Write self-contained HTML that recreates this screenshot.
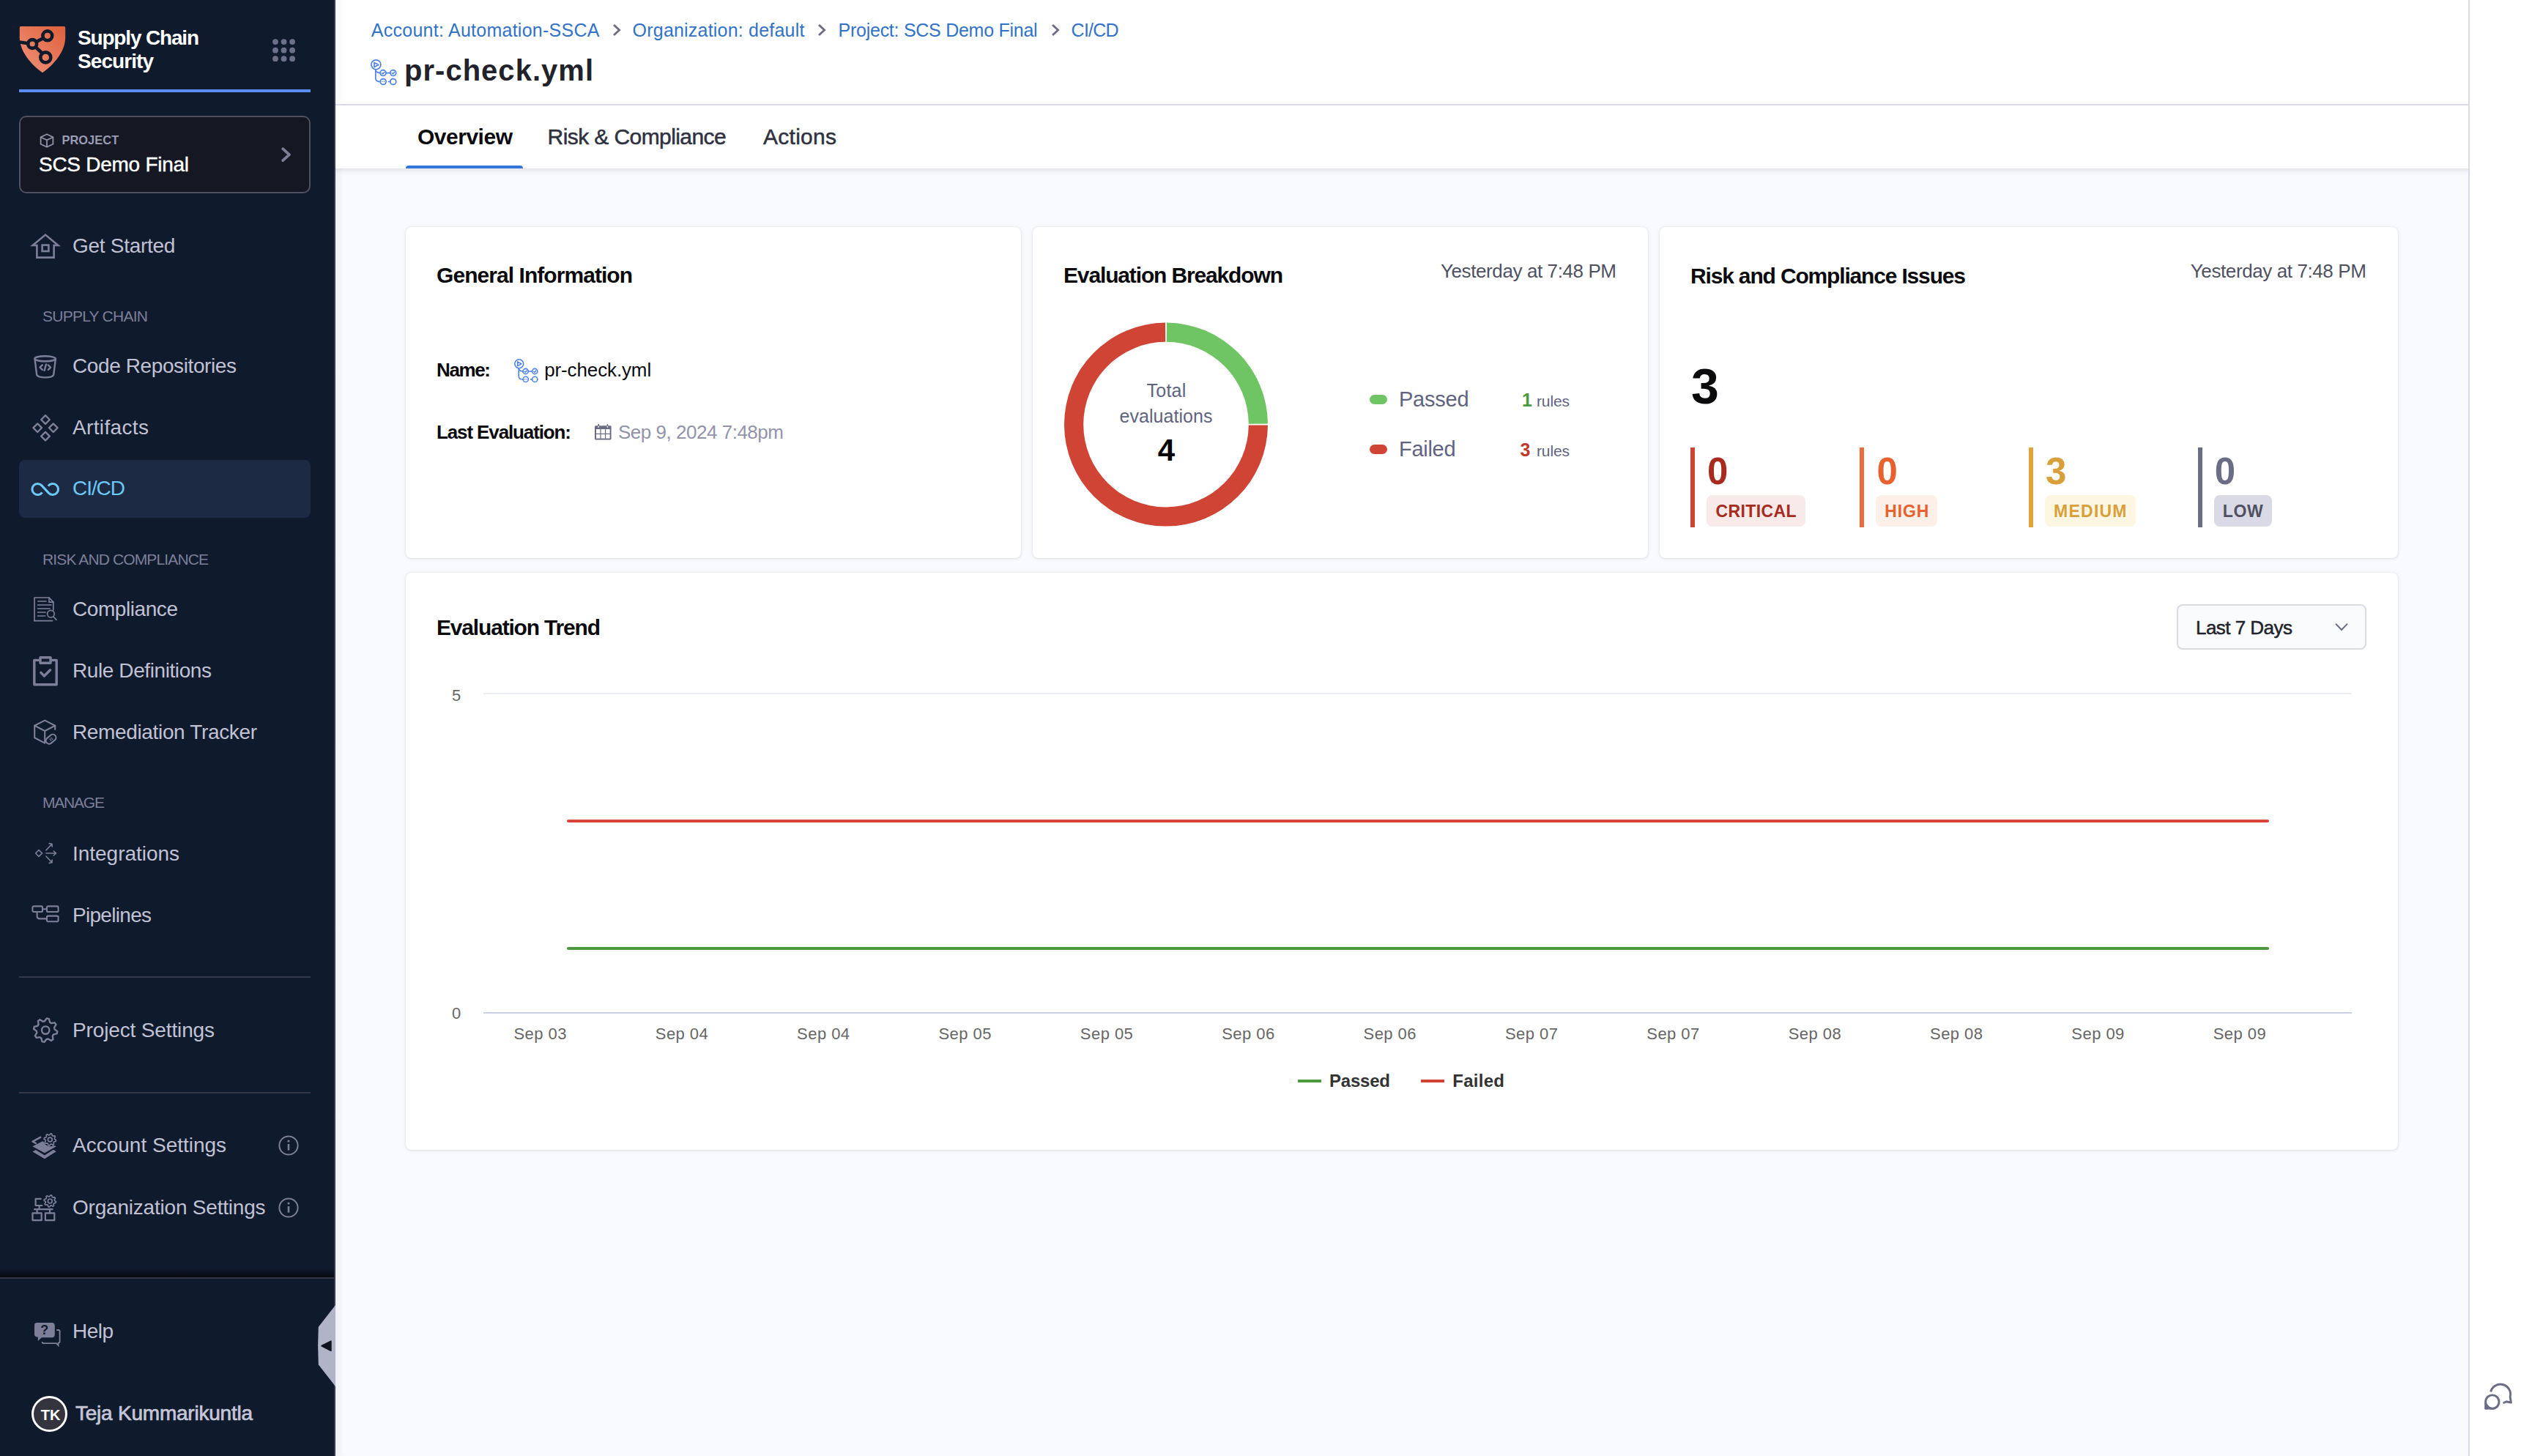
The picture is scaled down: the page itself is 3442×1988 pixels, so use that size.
<!DOCTYPE html>
<html><head><meta charset="utf-8">
<style>
html,body{margin:0;padding:0;width:3442px;height:1988px;overflow:hidden;background:#f9fafd;}
#root{position:absolute;left:0;top:0;width:1721px;height:994px;zoom:2;font-family:"Liberation Sans",sans-serif;overflow:hidden;background:#f9fafd;}
.t{position:absolute;white-space:nowrap;}
.r{position:absolute;box-sizing:border-box;}
svg{position:absolute;overflow:visible;}
</style></head><body><div id="root">
<div class="r" style="left:0px;top:0px;width:228px;height:994px;background:#101a2d;"></div>
<div class="r" style="left:228px;top:0px;width:1px;height:994px;background:#3b3c4a;"></div>
<svg style="left:13px;top:18px" width="32" height="32" viewBox="0 0 32 32">
<defs><linearGradient id="lg" x1="0" y1="1" x2="1" y2="0"><stop offset="0" stop-color="#f0937a"/><stop offset="1" stop-color="#df603b"/></linearGradient></defs>
<path d="M0.4 0.9 Q0.4 0 1.2 0 L30.8 0 Q31.6 0 31.6 0.9 L31.6 8 C31.4 17 24 26 16 31.6 C8 26 0.6 17 0.4 8 Z" fill="url(#lg)"/>
<g stroke="#101a2d" stroke-width="2.3" fill="none">
<circle cx="19.4" cy="6.4" r="3.2"/><circle cx="9.1" cy="12" r="2.95"/><circle cx="18.15" cy="21.2" r="3.5"/>
<path d="M11.7 10.6 L16.6 8"/><path d="M11.3 14.1 L15.6 18.1"/><path d="M-0.5 10.6 L6.1 11.6"/>
</g></svg>
<div class="t" style="left:53.00px;top:19.15px;font-size:14px;line-height:14px;color:#ffffff;font-weight:700;letter-spacing:-0.586px;">Supply Chain</div>
<div class="t" style="left:53.00px;top:35.15px;font-size:14px;line-height:14px;color:#ffffff;font-weight:700;letter-spacing:-0.464px;">Security</div>
<svg style="left:186px;top:27px" width="16" height="16"><circle cx="2.00" cy="1.55" r="1.95" fill="#6d7089"/><circle cx="2.00" cy="7.33" r="1.95" fill="#6d7089"/><circle cx="2.00" cy="13.11" r="1.95" fill="#6d7089"/><circle cx="7.78" cy="1.55" r="1.95" fill="#6d7089"/><circle cx="7.78" cy="7.33" r="1.95" fill="#6d7089"/><circle cx="7.78" cy="13.11" r="1.95" fill="#6d7089"/><circle cx="13.56" cy="1.55" r="1.95" fill="#6d7089"/><circle cx="13.56" cy="7.33" r="1.95" fill="#6d7089"/><circle cx="13.56" cy="13.11" r="1.95" fill="#6d7089"/></svg>
<div class="r" style="left:13px;top:61px;width:199px;height:2px;background:#5b8ef2;"></div>
<div class="r" style="left:13px;top:79.2px;width:199px;height:52.6px;background:#151823;border:1px solid #4e5060;border-radius:5px;"></div>
<svg style="left:27px;top:91px" width="10" height="10" viewBox="0 0 10 10" fill="none" stroke="#8f91a8" stroke-width="0.9">
<path d="M5 0.6 L9.2 2.6 L9.2 7.4 L5 9.4 L0.8 7.4 L0.8 2.6 Z"/><path d="M0.8 2.6 L5 4.6 L9.2 2.6 M5 4.6 L5 9.4"/></svg>
<div class="t" style="left:42.20px;top:91.56px;font-size:8.2px;line-height:8.2px;color:#9a9cb3;font-weight:700;letter-spacing:0.028px;">PROJECT</div>
<div class="t" style="left:26.50px;top:105.65px;font-size:14px;line-height:14px;color:#ffffff;letter-spacing:-0.135px;-webkit-text-stroke:0.2px #ffffff;">SCS Demo Final</div>
<svg style="left:191.5px;top:100px" width="8" height="12" viewBox="0 0 8 12" fill="none" stroke="#7d7f98" stroke-width="1.9" stroke-linecap="round" stroke-linejoin="round"><path d="M1.6 1.6 L6 5.6 L1.6 9.6"/></svg>
<div class="t" style="left:49.50px;top:160.75px;font-size:14px;line-height:14px;color:#c0c2d4;letter-spacing:-0.139px;">Get Started</div>
<svg style="left:21.5px;top:159.5px" width="19" height="17" viewBox="0 0 19 17" fill="none" stroke="#7d7f98" stroke-width="1.3">
<path d="M0.8 8 L9.5 0.8 L18.2 8 L15.3 8 L15.3 16.3 L3.7 16.3 L3.7 8 Z"/><rect x="7.3" y="7.8" width="4.4" height="4.2"/></svg>
<div class="t" style="left:29.00px;top:210.51px;font-size:10.5px;line-height:10.5px;color:#7d7f98;letter-spacing:-0.369px;">SUPPLY CHAIN</div>
<div class="t" style="left:49.50px;top:243.15px;font-size:14px;line-height:14px;color:#c0c2d4;letter-spacing:-0.198px;">Code Repositories</div>
<div class="t" style="left:49.50px;top:285.15px;font-size:14px;line-height:14px;color:#c0c2d4;letter-spacing:0.179px;">Artifacts</div>
<div class="r" style="left:13px;top:314px;width:199px;height:39.5px;background:#1d2a44;border-radius:4px;"></div>
<div class="t" style="left:49.50px;top:326.65px;font-size:14px;line-height:14px;color:#6cc8f7;letter-spacing:-0.528px;">CI/CD</div>
<svg style="left:21px;top:328.5px" width="20" height="11" viewBox="0 0 20 11" fill="none" stroke="#6cc8f7" stroke-width="1.55">
<path d="M7.77 7.65 A3.75 3.75 0 1 1 7.35 2.85 L12.35 8.15 A3.75 3.75 0 1 0 11.93 3.35"/></svg>
<div class="t" style="left:29.00px;top:376.51px;font-size:10.5px;line-height:10.5px;color:#7d7f98;letter-spacing:-0.437px;">RISK AND COMPLIANCE</div>
<div class="t" style="left:49.50px;top:409.15px;font-size:14px;line-height:14px;color:#c0c2d4;letter-spacing:-0.214px;">Compliance</div>
<div class="t" style="left:49.50px;top:451.15px;font-size:14px;line-height:14px;color:#c0c2d4;letter-spacing:-0.203px;">Rule Definitions</div>
<div class="t" style="left:49.50px;top:493.15px;font-size:14px;line-height:14px;color:#c0c2d4;letter-spacing:-0.176px;">Remediation Tracker</div>
<div class="t" style="left:29.00px;top:542.51px;font-size:10.5px;line-height:10.5px;color:#7d7f98;letter-spacing:-0.601px;">MANAGE</div>
<div class="t" style="left:49.50px;top:576.15px;font-size:14px;line-height:14px;color:#c0c2d4;letter-spacing:-0.014px;">Integrations</div>
<div class="t" style="left:49.50px;top:617.75px;font-size:14px;line-height:14px;color:#c0c2d4;letter-spacing:-0.352px;">Pipelines</div>
<div class="r" style="left:13px;top:666.5px;width:199px;height:1px;background:#353848;"></div>
<div class="t" style="left:49.50px;top:696.65px;font-size:14px;line-height:14px;color:#c0c2d4;letter-spacing:-0.070px;">Project Settings</div>
<div class="r" style="left:13px;top:745.5px;width:199px;height:1px;background:#353848;"></div>
<div class="t" style="left:49.50px;top:775.15px;font-size:14px;line-height:14px;color:#c0c2d4;">Account Settings</div>
<div class="t" style="left:49.50px;top:817.65px;font-size:14px;line-height:14px;color:#c0c2d4;letter-spacing:-0.103px;">Organization Settings</div>
<div class="r" style="left:0px;top:866px;width:228px;height:6px;background:linear-gradient(#101a2d,#07090f);"></div>
<div class="r" style="left:0px;top:872px;width:228px;height:1px;background:#353848;"></div>
<div class="t" style="left:49.50px;top:901.85px;font-size:14px;line-height:14px;color:#c0c2d4;letter-spacing:-0.264px;">Help</div>
<svg style="left:217px;top:891px" width="12" height="56" viewBox="0 0 12 56"><path d="M12 0 L12 55.5 L0.4 40.6 Q-0.3 27.7 0.4 14.9 Z" fill="#b1b3c6"/><path d="M2.6 27.8 L8.9 24.6 L8.9 31.1 Z" fill="#0f1320" stroke="#0f1320" stroke-width="0.9" stroke-linejoin="round"/></svg>
<div class="r" style="left:21.5px;top:953px;width:24.5px;height:24.5px;background:#34343f;border:1.5px solid #ffffff;border-radius:50%;"></div>
<div class="t" style="left:27.90px;top:960.83px;font-size:10px;line-height:10px;color:#ffffff;font-weight:700;">TK</div>
<div class="t" style="left:51.50px;top:957.75px;font-size:14px;line-height:14px;color:#c5c7d8;letter-spacing:-0.114px;-webkit-text-stroke:0.35px #c5c7d8;">Teja Kummarikuntla</div>
<div class="r" style="left:229px;top:0px;width:1456px;height:71px;background:#ffffff;"></div>
<div class="r" style="left:229px;top:71px;width:1456px;height:1px;background:#d9dae5;"></div>
<div class="r" style="left:229px;top:72px;width:1456px;height:43px;background:#ffffff;"></div>
<div class="r" style="left:229px;top:115px;width:1456px;height:5px;background:linear-gradient(rgba(20,25,40,0.09),rgba(20,25,40,0.02) 60%,rgba(20,25,40,0));"></div>
<div class="r" style="left:229px;top:115px;width:6px;height:879px;background:linear-gradient(90deg,rgba(20,25,40,0.045),rgba(20,25,40,0));"></div>
<div class="r" style="left:229px;top:0px;width:6px;height:71px;background:linear-gradient(90deg,rgba(20,25,40,0.04),rgba(20,25,40,0));"></div>
<div class="r" style="left:1685px;top:0px;width:1px;height:994px;background:#d9dae5;"></div>
<div class="r" style="left:1686px;top:0px;width:35px;height:994px;background:#ffffff;"></div>
<div class="t" style="left:253.40px;top:14.42px;font-size:12.5px;line-height:12.5px;color:#3273c8;letter-spacing:0.128px;">Account: Automation-SSCA</div>
<div class="t" style="left:431.80px;top:14.42px;font-size:12.5px;line-height:12.5px;color:#3273c8;letter-spacing:0.102px;">Organization: default</div>
<div class="t" style="left:572.30px;top:14.42px;font-size:12.5px;line-height:12.5px;color:#3273c8;letter-spacing:-0.133px;">Project: SCS Demo Final</div>
<div class="t" style="left:731.30px;top:14.42px;font-size:12.5px;line-height:12.5px;color:#3273c8;letter-spacing:-0.382px;">CI/CD</div>
<svg style="left:417.8px;top:16px" width="6" height="9" viewBox="0 0 6 9" fill="none" stroke="#6b6d85" stroke-width="1.4"><path d="M1 1 L4.8 4.5 L1 8"/></svg>
<svg style="left:558px;top:16px" width="6" height="9" viewBox="0 0 6 9" fill="none" stroke="#6b6d85" stroke-width="1.4"><path d="M1 1 L4.8 4.5 L1 8"/></svg>
<svg style="left:717.5px;top:16px" width="6" height="9" viewBox="0 0 6 9" fill="none" stroke="#6b6d85" stroke-width="1.4"><path d="M1 1 L4.8 4.5 L1 8"/></svg>
<div class="t" style="left:276.00px;top:37.82px;font-size:20px;line-height:20px;color:#22222a;font-weight:700;letter-spacing:0.510px;">pr-check.yml</div>
<div class="t" style="left:285.00px;top:86.00px;font-size:15px;line-height:15px;color:#0b0b0d;font-weight:700;letter-spacing:-0.244px;">Overview</div>
<div class="t" style="left:373.80px;top:86.00px;font-size:15px;line-height:15px;color:#30313f;letter-spacing:-0.294px;-webkit-text-stroke:0.25px #30313f;">Risk &amp; Compliance</div>
<div class="t" style="left:521.00px;top:86.00px;font-size:15px;line-height:15px;color:#30313f;letter-spacing:0.135px;-webkit-text-stroke:0.25px #30313f;">Actions</div>
<div class="r" style="left:277px;top:113px;width:80px;height:2px;background:#3375d8;border-radius:2px 2px 0 0;"></div>
<div class="r" style="left:277px;top:155px;width:420px;height:226px;background:#ffffff;border-radius:4px;box-shadow:0 0 1px rgba(40,41,61,0.08),0 0.5px 2px rgba(96,97,112,0.16);"></div>
<div class="r" style="left:705px;top:155px;width:420px;height:226px;background:#ffffff;border-radius:4px;box-shadow:0 0 1px rgba(40,41,61,0.08),0 0.5px 2px rgba(96,97,112,0.16);"></div>
<div class="r" style="left:1133px;top:155px;width:504px;height:226px;background:#ffffff;border-radius:4px;box-shadow:0 0 1px rgba(40,41,61,0.08),0 0.5px 2px rgba(96,97,112,0.16);"></div>
<div class="r" style="left:277px;top:391px;width:1360px;height:394px;background:#ffffff;border-radius:4px;box-shadow:0 0 1px rgba(40,41,61,0.08),0 0.5px 2px rgba(96,97,112,0.16);"></div>
<div class="t" style="left:298.00px;top:180.30px;font-size:15px;line-height:15px;color:#0b0b0d;font-weight:700;letter-spacing:-0.473px;">General Information</div>
<div class="t" style="left:298.00px;top:246.20px;font-size:13px;line-height:13px;color:#0b0b0d;font-weight:700;letter-spacing:-0.684px;">Name:</div>
<div class="t" style="left:371.60px;top:246.20px;font-size:13px;line-height:13px;color:#0b0b0d;letter-spacing:-0.062px;">pr-check.yml</div>
<div class="t" style="left:298.00px;top:288.50px;font-size:13px;line-height:13px;color:#0b0b0d;font-weight:700;letter-spacing:-0.561px;">Last Evaluation:</div>
<div class="t" style="left:422.00px;top:288.50px;font-size:13px;line-height:13px;color:#9293ab;letter-spacing:-0.241px;">Sep 9, 2024 7:48pm</div>
<div class="t" style="left:726.00px;top:180.60px;font-size:15px;line-height:15px;color:#0b0b0d;font-weight:700;letter-spacing:-0.572px;">Evaluation Breakdown</div>
<div class="t" style="left:983.50px;top:178.30px;font-size:13px;line-height:13px;color:#4f5162;letter-spacing:-0.201px;">Yesterday at 7:48 PM</div>
<div class="t" style="left:1154.00px;top:180.80px;font-size:15px;line-height:15px;color:#0b0b0d;font-weight:700;letter-spacing:-0.583px;">Risk and Compliance Issues</div>
<div class="t" style="left:1495.40px;top:178.30px;font-size:13px;line-height:13px;color:#4f5162;letter-spacing:-0.201px;">Yesterday at 7:48 PM</div>
<div class="t" style="left:298.00px;top:420.90px;font-size:15px;line-height:15px;color:#0b0b0d;font-weight:700;letter-spacing:-0.591px;">Evaluation Trend</div>
<svg style="left:253px;top:40.5px" width="18" height="18" viewBox="0 0 18 18" fill="none" stroke="#4d82e8" stroke-width="0.85" stroke-linecap="round" stroke-linejoin="round">
<circle cx="3.7" cy="3.66" r="3.25"/><path d="M2.5 2.2 L5.45 3.75 L2.5 5.25 Z"/>
<path d="M3.4 6.95 L3.4 12.9 Q3.4 15.3 6.6 15.3 M3.5 7.7 Q4.4 9.3 6.55 9.3"/>
<circle cx="8.53" cy="9.27" r="1.98"/><circle cx="15.4" cy="9.27" r="1.98"/><circle cx="8.6" cy="15.25" r="1.98"/><circle cx="15.4" cy="15.25" r="1.98"/>
<path d="M10.5 9.27 L13.4 9.27 M12.2 15.25 L13.4 15.25"/>
<path d="M7.7 9.35 L8.35 9.95 L9.4 8.75 M14.6 9.35 L15.25 9.95 L16.3 8.75" stroke-width="0.75"/>
<path d="M7.95 15.1 L7.95 15.3 M9.25 15.1 L9.25 15.3" stroke-width="0.7"/>
</svg>
<svg style="left:350.8px;top:245px" width="16.5" height="16.5" viewBox="0 0 18 18" fill="none" stroke="#4d82e8" stroke-width="0.85" stroke-linecap="round" stroke-linejoin="round">
<circle cx="3.7" cy="3.66" r="3.25"/><path d="M2.5 2.2 L5.45 3.75 L2.5 5.25 Z"/>
<path d="M3.4 6.95 L3.4 12.9 Q3.4 15.3 6.6 15.3 M3.5 7.7 Q4.4 9.3 6.55 9.3"/>
<circle cx="8.53" cy="9.27" r="1.98"/><circle cx="15.4" cy="9.27" r="1.98"/><circle cx="8.6" cy="15.25" r="1.98"/><circle cx="15.4" cy="15.25" r="1.98"/>
<path d="M10.5 9.27 L13.4 9.27 M12.2 15.25 L13.4 15.25"/>
<path d="M7.7 9.35 L8.35 9.95 L9.4 8.75 M14.6 9.35 L15.25 9.95 L16.3 8.75" stroke-width="0.75"/>
<path d="M7.95 15.1 L7.95 15.3 M9.25 15.1 L9.25 15.3" stroke-width="0.7"/>
</svg>
<svg style="left:406px;top:289px" width="12" height="12" viewBox="0 0 12 12">
<rect x="0" y="1.6" width="11.3" height="9.6" rx="0.7" fill="#6b6d85"/>
<g fill="#ffffff"><rect x="1.0" y="4.0" width="2.7" height="2.9"/><rect x="4.3" y="4.0" width="2.7" height="2.9"/><rect x="7.6" y="4.0" width="2.7" height="2.9"/>
<rect x="1.0" y="7.5" width="2.7" height="2.8"/><rect x="4.3" y="7.5" width="2.7" height="2.8"/><rect x="7.6" y="7.5" width="2.7" height="2.8"/></g>
<g fill="none" stroke="#6b6d85" stroke-width="0.8"><path d="M2.6 2.4 L2.6 0.5 M8.7 2.4 L8.7 0.5"/></g>
<g fill="#ffffff"><rect x="2.2" y="2.0" width="0.8" height="0.8"/><rect x="8.3" y="2.0" width="0.8" height="0.8"/></g>
</svg>
<svg style="left:0;top:0" width="1721" height="994"><path d="M796.49 220.30 A69.5 69.5 0 0 1 865.50 289.31 L852.40 289.41 A56.4 56.4 0 0 0 796.39 233.40 Z" fill="#6fc463"/><path d="M865.50 290.29 A69.5 69.5 0 1 1 795.51 220.30 L795.61 233.40 A56.4 56.4 0 1 0 852.40 290.19 Z" fill="#d04436"/></svg>
<div class="t" style="left:782.80px;top:260.42px;font-size:12.5px;line-height:12.5px;color:#5f6380;letter-spacing:0.099px;">Total</div>
<div class="t" style="left:764.30px;top:278.12px;font-size:12.5px;line-height:12.5px;color:#5f6380;letter-spacing:0.016px;">evaluations</div>
<div class="t" style="left:790.40px;top:297.22px;font-size:21px;line-height:21px;color:#000000;font-weight:700;">4</div>
<div class="r" style="left:935px;top:269.6px;width:12px;height:6.4px;background:#6fc463;border-radius:4px;"></div>
<div class="r" style="left:935px;top:303.7px;width:12px;height:6.4px;background:#d04436;border-radius:4px;"></div>
<div class="t" style="left:955.00px;top:265.53px;font-size:14.5px;line-height:14.5px;color:#5f6380;letter-spacing:-0.113px;">Passed</div>
<div class="t" style="left:955.00px;top:299.53px;font-size:14.5px;line-height:14.5px;color:#5f6380;letter-spacing:-0.139px;">Failed</div>
<div class="t" style="left:1039.00px;top:267.22px;font-size:12.5px;line-height:12.5px;color:#4d9a3e;font-weight:700;">1</div>
<div class="t" style="left:1037.80px;top:301.22px;font-size:12.5px;line-height:12.5px;color:#c0392b;font-weight:700;">3</div>
<div class="t" style="left:1049.00px;top:268.31px;font-size:10.5px;line-height:10.5px;color:#5f6380;letter-spacing:-0.065px;">rules</div>
<div class="t" style="left:1049.00px;top:302.31px;font-size:10.5px;line-height:10.5px;color:#5f6380;letter-spacing:-0.065px;">rules</div>
<div class="t" style="left:1154.50px;top:246.62px;font-size:34px;line-height:34px;color:#0b0b0d;font-weight:700;">3</div>
<div class="r" style="left:1154px;top:305.7px;width:3px;height:54.3px;background:#d04436;"></div>
<div class="t" style="left:1165.50px;top:309.01px;font-size:25.5px;line-height:25.5px;color:#a82b20;font-weight:700;">0</div>
<div class="r" style="left:1165px;top:338px;width:67.6px;height:21.7px;background:#f9eaea;border-radius:4px;"></div>
<div class="t" style="left:1171.30px;top:343.27px;font-size:11.5px;line-height:11.5px;color:#a82b20;font-weight:700;letter-spacing:0.192px;">CRITICAL</div>
<div class="r" style="left:1269.7px;top:305.7px;width:3px;height:54.3px;background:#ed6a3a;"></div>
<div class="t" style="left:1281.20px;top:309.01px;font-size:25.5px;line-height:25.5px;color:#e8622f;font-weight:700;">0</div>
<div class="r" style="left:1280.7px;top:338px;width:41.9px;height:21.7px;background:#fdf0e8;border-radius:4px;"></div>
<div class="t" style="left:1286.65px;top:343.27px;font-size:11.5px;line-height:11.5px;color:#e8622f;font-weight:700;letter-spacing:0.417px;">HIGH</div>
<div class="r" style="left:1385px;top:305.7px;width:3px;height:54.3px;background:#e0a53a;"></div>
<div class="t" style="left:1396.50px;top:309.01px;font-size:25.5px;line-height:25.5px;color:#d9a03a;font-weight:700;">3</div>
<div class="r" style="left:1396px;top:338px;width:61.8px;height:21.7px;background:#fdf6e3;border-radius:4px;"></div>
<div class="t" style="left:1402.05px;top:343.27px;font-size:11.5px;line-height:11.5px;color:#d9a03a;font-weight:700;letter-spacing:0.613px;">MEDIUM</div>
<div class="r" style="left:1500.4px;top:305.7px;width:3px;height:54.3px;background:#6b6d85;"></div>
<div class="t" style="left:1511.90px;top:309.01px;font-size:25.5px;line-height:25.5px;color:#6b6d85;font-weight:700;">0</div>
<div class="r" style="left:1511.4px;top:338px;width:39.5px;height:21.7px;background:#d9dae5;border-radius:4px;"></div>
<div class="t" style="left:1517.40px;top:343.27px;font-size:11.5px;line-height:11.5px;color:#4f5162;font-weight:700;letter-spacing:0.338px;">LOW</div>
<div class="r" style="left:330px;top:473px;width:1275.5px;height:1px;background:#eceef5;"></div>
<div class="r" style="left:330px;top:690.8px;width:1275.5px;height:1px;background:#ccd3e6;"></div>
<div class="t" style="left:308.50px;top:469.69px;font-size:11px;line-height:11px;color:#666666;">5</div>
<div class="t" style="left:308.50px;top:686.49px;font-size:11px;line-height:11px;color:#666666;">0</div>
<div class="r" style="left:386.8px;top:559.6px;width:1162.2px;height:2px;background:#d9443a;border-radius:1px;"></div>
<div class="r" style="left:386.8px;top:646.3px;width:1162.2px;height:2px;background:#4d9a3e;border-radius:1px;"></div>
<div class="t" style="left:350.70px;top:700.69px;font-size:11px;line-height:11px;color:#666666;letter-spacing:0.227px;">Sep 03</div>
<div class="t" style="left:447.38px;top:700.69px;font-size:11px;line-height:11px;color:#666666;letter-spacing:0.227px;">Sep 04</div>
<div class="t" style="left:544.06px;top:700.69px;font-size:11px;line-height:11px;color:#666666;letter-spacing:0.227px;">Sep 04</div>
<div class="t" style="left:640.74px;top:700.69px;font-size:11px;line-height:11px;color:#666666;letter-spacing:0.227px;">Sep 05</div>
<div class="t" style="left:737.42px;top:700.69px;font-size:11px;line-height:11px;color:#666666;letter-spacing:0.227px;">Sep 05</div>
<div class="t" style="left:834.10px;top:700.69px;font-size:11px;line-height:11px;color:#666666;letter-spacing:0.227px;">Sep 06</div>
<div class="t" style="left:930.78px;top:700.69px;font-size:11px;line-height:11px;color:#666666;letter-spacing:0.227px;">Sep 06</div>
<div class="t" style="left:1027.46px;top:700.69px;font-size:11px;line-height:11px;color:#666666;letter-spacing:0.227px;">Sep 07</div>
<div class="t" style="left:1124.14px;top:700.69px;font-size:11px;line-height:11px;color:#666666;letter-spacing:0.227px;">Sep 07</div>
<div class="t" style="left:1220.82px;top:700.69px;font-size:11px;line-height:11px;color:#666666;letter-spacing:0.227px;">Sep 08</div>
<div class="t" style="left:1317.50px;top:700.69px;font-size:11px;line-height:11px;color:#666666;letter-spacing:0.227px;">Sep 08</div>
<div class="t" style="left:1414.18px;top:700.69px;font-size:11px;line-height:11px;color:#666666;letter-spacing:0.227px;">Sep 09</div>
<div class="t" style="left:1510.86px;top:700.69px;font-size:11px;line-height:11px;color:#666666;letter-spacing:0.227px;">Sep 09</div>
<div class="r" style="left:885.9px;top:737px;width:16px;height:2px;background:#4d9a3e;"></div>
<div class="r" style="left:970px;top:737px;width:16px;height:2px;background:#d04436;"></div>
<div class="t" style="left:907.50px;top:731.84px;font-size:12px;line-height:12px;color:#333333;font-weight:700;letter-spacing:-0.106px;">Passed</div>
<div class="t" style="left:991.60px;top:731.84px;font-size:12px;line-height:12px;color:#333333;font-weight:700;letter-spacing:0.145px;">Failed</div>
<div class="r" style="left:1486px;top:412.5px;width:129.6px;height:31px;background:#fafbfd;border:1px solid #d9dae5;border-radius:4px;"></div>
<div class="t" style="left:1499.00px;top:421.80px;font-size:13px;line-height:13px;color:#22222a;letter-spacing:-0.264px;-webkit-text-stroke:0.25px #22222a;">Last 7 Days</div>
<svg style="left:1594px;top:425px" width="9" height="6" viewBox="0 0 9 6" fill="none" stroke="#6b6d85" stroke-width="1"><path d="M0.5 0.8 L4.5 5 L8.5 0.8"/></svg>
<svg style="left:1694px;top:942px" width="22" height="22" viewBox="0 0 22 22" fill="none" stroke="#6b6d85" stroke-width="1.45" stroke-linejoin="round">
<path d="M6.3 8.2 A6.85 6.85 0 1 1 19.6 11.6 L20.2 15.5 L17 14.9 Q15.9 15.5 14.8 15.8"/>
<circle cx="7.4" cy="15.05" r="4.6"/><path d="M2.85 15.6 L2.8 19.6 L6.6 19.4" fill="#6b6d85"/></svg>
<svg style="left:22.9px;top:242.7px" width="16" height="16" viewBox="0 0 16 16" fill="none" stroke="#7d7f98" stroke-width="1.2" stroke-linejoin="round" stroke-linecap="round" ><ellipse cx="7.85" cy="2.4" rx="7.1" ry="1.75"/><path d="M0.75 2.4 L2.1 13.4 C2.6 14.6 5 15.2 7.85 15.2 C10.7 15.2 13.1 14.6 13.6 13.4 L14.95 2.4"/><path d="M5.9 6.7 L4.3 8.3 L5.9 9.9 M8.5 6.2 L7.3 10.4 M9.9 6.7 L11.5 8.3 L9.9 9.9"/></svg>
<svg style="left:22px;top:282.9px" width="18" height="18.5" viewBox="0 0 18 18.5" fill="none" stroke="#7d7f98" stroke-width="1.2" stroke-linejoin="round" stroke-linecap="round" ><path d="M9 0.6000000000000001 L11.9 3.5 L9 6.4 L6.1 3.5 Z"/><path d="M3.6 6.199999999999999 L6.5 9.1 L3.6 12.0 L0.7000000000000002 9.1 Z"/><path d="M14.4 6.199999999999999 L17.3 9.1 L14.4 12.0 L11.5 9.1 Z"/><path d="M9 11.9 L11.9 14.8 L9 17.7 L6.1 14.8 Z"/></svg>
<svg style="left:22.9px;top:407.5px" width="16" height="17" viewBox="0 0 16 17" fill="none" stroke="#7d7f98" stroke-width="0.85" stroke-linejoin="round" stroke-linecap="round" ><path d="M0.5 16.3 L0.5 0.5 L10.5 0.5 L13.4 3.6 L13.4 9"/><path d="M10.5 0.5 L10.5 3.6 L13.4 3.6"/><path d="M3 3 L8.5 3 M2.8 5.5 L12 5.5 M2.8 8 L11 8 M2.8 10.5 L8 10.5 M2.8 13 L7.8 13 M0.5 16.3 L12.8 16.3"/><circle cx="11.7" cy="11.6" r="2.4"/><path d="M13.4 13.4 L15.5 15.7"/></svg>
<svg style="left:22.5px;top:447.8px" width="17" height="20.3" viewBox="0 0 17 20.3" fill="none" stroke="#7d7f98" stroke-width="1.7" stroke-linejoin="round" stroke-linecap="round" stroke-linejoin="miter" stroke-linecap="butt"><path d="M4.6 2.7 L0.9 2.7 L0.9 19.4 L16.1 19.4 L16.1 2.7 L12.4 2.7"/><rect x="5" y="0.9" width="7" height="3.7"/><path d="M5.4 11.2 L7.7 13.5 L11.8 9.4"/></svg>
<svg style="left:22.9px;top:490.9px" width="16.5" height="18.5" viewBox="0 0 16.5 18.5" fill="none" stroke="#7d7f98" stroke-width="1.05" stroke-linejoin="round" stroke-linecap="round" ><path d="M14.6 7 L14.6 4.4 L7.6 0.8 L0.6 4.4 L0.6 12.6 L7.6 16.3"/><path d="M0.6 4.4 L7.6 8 L14.6 4.4 M7.6 8 L7.6 16"/><g transform="rotate(-40 11.8 13.6)"><rect x="8" y="11.4" width="7.6" height="4.4" rx="2.2"/><path d="M11.2 13.2 L11.3 13.2 M12.4 13.2 L12.5 13.2 M11.2 14.2 L11.3 14.2 M12.4 14.2 L12.5 14.2" stroke-width="0.8"/></g></svg>
<svg style="left:24px;top:575px" width="15" height="15" viewBox="0 0 15 15" fill="none" stroke="#7d7f98" stroke-width="0.8" stroke-linejoin="round" stroke-linecap="round" ><path d="M2.5 5.3 L4.8 7.5 L2.5 9.7 L0.3 7.5 Z"/><path d="M7.5 7.5 L14.3 7.5 M12.6 6 L14.3 7.5 L12.6 9 M7.5 5.4 L11.5 1.2 M9.6 0.8 L11.5 1.2 L11.6 3 M7.5 9.6 L11.5 13.8 M11.6 12 L11.5 13.8 L9.6 14.2"/></svg>
<svg style="left:21.7px;top:618px" width="19" height="12" viewBox="0 0 19 12" fill="none" stroke="#7d7f98" stroke-width="1.05" stroke-linejoin="round" stroke-linecap="round" ><rect x="0.7" y="0.7" width="6.8" height="3.8" rx="0.8"/><rect x="10.5" y="0.7" width="7.8" height="3.8" rx="0.8"/><rect x="10.5" y="7.3" width="7.8" height="3.8" rx="0.8"/><path d="M7.5 2.6 L10.5 2.6 M3.8 4.5 L3.8 7.5 C3.8 8.7 4.4 9.2 5.6 9.2 L10.5 9.2"/></svg>
<svg style="left:22.5px;top:694.5px" width="17.5" height="18" viewBox="0 0 17.5 18" fill="none" stroke="#7d7f98" stroke-width="1.2" stroke-linejoin="round" stroke-linecap="round" ><path d="M9.39 0.74 L10.95 1.05 L11.52 3.33 L12.53 4.01 L14.86 3.66 L15.74 4.98 L14.53 7.00 L14.77 8.19 L16.66 9.59 L16.35 11.15 L14.07 11.72 L13.39 12.73 L13.74 15.06 L12.42 15.94 L10.40 14.73 L9.21 14.97 L7.81 16.86 L6.25 16.55 L5.68 14.27 L4.67 13.59 L2.34 13.94 L1.46 12.62 L2.67 10.60 L2.43 9.41 L0.54 8.01 L0.85 6.45 L3.13 5.88 L3.81 4.87 L3.46 2.54 L4.78 1.66 L6.80 2.87 L7.99 2.63 Z"/><circle cx="8.6" cy="8.8" r="2.6"/></svg>
<svg style="left:21.5px;top:773.5px" width="18" height="18.5" viewBox="0 0 18 18.5" fill="none" stroke="#7d7f98" stroke-width="0.85" stroke-linejoin="round" stroke-linecap="round" ><path d="M6.1 2.9 L0.8 5.8 L3 7.0" stroke-width="1.25"/><path d="M0.7 9.1 L7.5 5.6 L16.9 9.1 L8.95 13.6 Z" fill="#7d7f98" stroke="none"/><path d="M0.7 12.7 L2.9 11.5 L8.95 15.2 L15 11.4 L16.9 12.6 L8.95 17.6 Z" fill="#7d7f98" stroke="none"/><circle cx="12.65" cy="4.5" r="4.6" fill="#101a2d" stroke="none"/><path d="M13.05 0.42 L13.84 0.58 L14.13 1.72 L14.65 2.07 L15.82 1.90 L16.27 2.57 L15.66 3.59 L15.78 4.19 L16.73 4.90 L16.57 5.69 L15.43 5.98 L15.08 6.50 L15.25 7.67 L14.58 8.12 L13.56 7.51 L12.96 7.63 L12.25 8.58 L11.46 8.42 L11.17 7.28 L10.65 6.93 L9.48 7.10 L9.03 6.43 L9.64 5.41 L9.52 4.81 L8.57 4.10 L8.73 3.31 L9.87 3.02 L10.22 2.50 L10.05 1.33 L10.72 0.88 L11.74 1.49 L12.34 1.37 Z"/><circle cx="12.65" cy="4.5" r="1.45"/></svg>
<svg style="left:21.5px;top:815.5px" width="17.5" height="18" viewBox="0 0 17.5 18" fill="none" stroke="#7d7f98" stroke-width="0.85" stroke-linejoin="round" stroke-linecap="round" ><path d="M6.4 2.9 L2.8 2.9 L2.8 7.5 L7.2 7.5 M5.3 7.5 L5.3 10.1 M2 10.1 L14.3 10.1 M3.8 10.1 L3.8 12.7 M12.5 10.1 L12.5 12.7" stroke-width="1.1"/><rect x="0.75" y="12.7" width="6.1" height="4.9" stroke-width="1.1"/><rect x="9.45" y="12.7" width="6.2" height="4.9" stroke-width="1.1"/><circle cx="12.65" cy="4.45" r="4.6" fill="#101a2d" stroke="none"/><path d="M13.05 0.37 L13.84 0.53 L14.13 1.67 L14.65 2.02 L15.82 1.85 L16.27 2.52 L15.66 3.54 L15.78 4.14 L16.73 4.85 L16.57 5.64 L15.43 5.93 L15.08 6.45 L15.25 7.62 L14.58 8.07 L13.56 7.46 L12.96 7.58 L12.25 8.53 L11.46 8.37 L11.17 7.23 L10.65 6.88 L9.48 7.05 L9.03 6.38 L9.64 5.36 L9.52 4.76 L8.57 4.05 L8.73 3.26 L9.87 2.97 L10.22 2.45 L10.05 1.28 L10.72 0.83 L11.74 1.44 L12.34 1.32 Z"/><circle cx="12.65" cy="4.45" r="1.45"/></svg>
<svg style="left:190px;top:775px" width="14" height="14" viewBox="0 0 14 14" fill="none" stroke="#7d7f98" stroke-width="1"><circle cx="7" cy="7" r="6.3"/><path d="M7 6 L7 10.3" stroke-width="1.3"/><circle cx="7" cy="4" r="0.8" fill="#7d7f98" stroke="none"/></svg>
<svg style="left:190px;top:817.5px" width="14" height="14" viewBox="0 0 14 14" fill="none" stroke="#7d7f98" stroke-width="1"><circle cx="7" cy="7" r="6.3"/><path d="M7 6 L7 10.3" stroke-width="1.3"/><circle cx="7" cy="4" r="0.8" fill="#7d7f98" stroke="none"/></svg>
<svg style="left:23px;top:902.5px" width="19" height="17" viewBox="0 0 19 17">
<path d="M2 0.5 L12.5 0.5 C13.6 0.5 14.4 1.3 14.4 2.4 L14.4 8.7 C14.4 9.8 13.6 10.6 12.5 10.6 L5.4 10.6 L2.9 13 L2.9 10.4 C1.2 10.2 0.5 9.5 0.5 8.6 L0.5 2.2 C0.5 1.2 1.1 0.5 2 0.5 Z" fill="#7d7f98"/>
<text x="7.4" y="8.6" font-family="Liberation Sans" font-weight="700" font-size="9" fill="#101a2d" text-anchor="middle">?</text>
<path d="M17.8 6 L17.8 13.3 C17.8 14 17.3 14.3 16.8 14.3 L16.8 16 L15.5 14.6 L6.8 14.6 C6 14.6 5.8 14 5.8 13.5" fill="none" stroke="#7d7f98" stroke-width="0.9"/>
<path d="M15.6 5.5 L16.9 5.5 C17.5 5.5 17.8 5.8 17.8 6.4" fill="none" stroke="#7d7f98" stroke-width="0.9"/>
</svg>
</div></body></html>
